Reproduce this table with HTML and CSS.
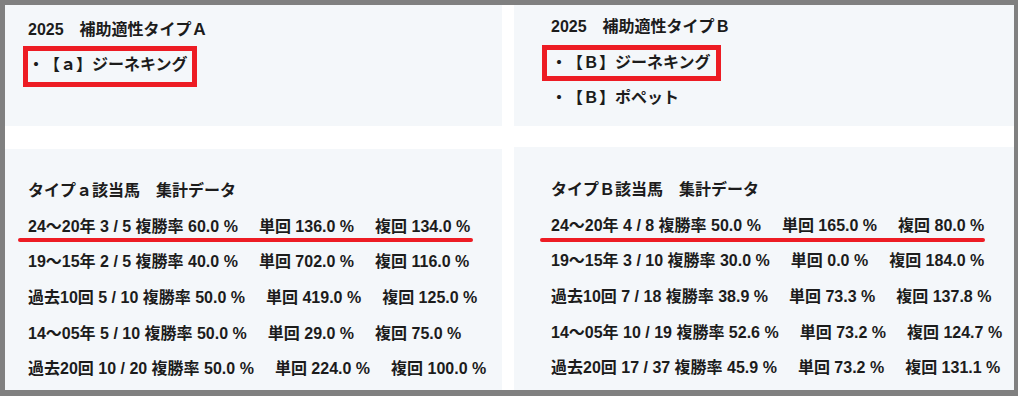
FILE: index.html
```html
<!DOCTYPE html>
<html lang="ja">
<head>
<meta charset="utf-8">
<title>補助適性タイプ</title>
<link rel="stylesheet" href="styles.css">
</head>
<body>
<div class="frame">
  <div class="col col-left">
    <section class="panel top top-left">
      <div class="line">2025　補助適性タイプＡ</div>
      <div class="line"><span class="boxed boxed-a">・【ａ】ジーネキング</span></div>
    </section>
    <section class="panel bottom bottom-left">
      <div class="line">タイプａ該当馬　集計データ</div>
      <div class="line row"><span>24～20年 3 / 5 複勝率 60.0 %</span><span class="seg">単回 136.0 %</span><span class="seg">複回 134.0 %</span><span class="uline uline-a"></span></div>
      <div class="line row"><span>19～15年 2 / 5 複勝率 40.0 %</span><span class="seg">単回 702.0 %</span><span class="seg">複回 116.0 %</span></div>
      <div class="line row"><span>過去10回 5 / 10 複勝率 50.0 %</span><span class="seg">単回 419.0 %</span><span class="seg">複回 125.0 %</span></div>
      <div class="line row"><span>14～05年 5 / 10 複勝率 50.0 %</span><span class="seg">単回 29.0 %</span><span class="seg">複回 75.0 %</span></div>
      <div class="line row"><span>過去20回 10 / 20 複勝率 50.0 %</span><span class="seg">単回 224.0 %</span><span class="seg">複回 100.0 %</span></div>
    </section>
  </div>
  <div class="col col-right">
    <section class="panel top top-right">
      <div class="line">2025　補助適性タイプＢ</div>
      <div class="line"><span class="boxed boxed-b">・【Ｂ】ジーネキング</span></div>
      <div class="line">・【Ｂ】ポペット</div>
    </section>
    <section class="panel bottom bottom-right">
      <div class="line">タイプＢ該当馬　集計データ</div>
      <div class="line row"><span>24～20年 4 / 8 複勝率 50.0 %</span><span class="seg">単回 165.0 %</span><span class="seg">複回 80.0 %</span><span class="uline uline-b"></span></div>
      <div class="line row"><span>19～15年 3 / 10 複勝率 30.0 %</span><span class="seg">単回 0.0 %</span><span class="seg">複回 184.0 %</span></div>
      <div class="line row"><span>過去10回 7 / 18 複勝率 38.9 %</span><span class="seg">単回 73.3 %</span><span class="seg">複回 137.8 %</span></div>
      <div class="line row"><span>14～05年 10 / 19 複勝率 52.6 %</span><span class="seg">単回 73.2 %</span><span class="seg">複回 124.7 %</span></div>
      <div class="line row"><span>過去20回 17 / 37 複勝率 45.9 %</span><span class="seg">単回 73.2 %</span><span class="seg">複回 131.1 %</span></div>
    </section>
  </div>
</div>
</body>
</html>
```
FILE: styles.css
```css
html, body {
  margin: 0;
  padding: 0;
  background: #ffffff;
}

.frame {
  box-sizing: border-box;
  width: 1018px;
  height: 396px;
  border-style: solid;
  border-color: #808080;
  border-width: 5px 4px 6px 5px;
  background: #ffffff;
  display: grid;
  grid-template-columns: 497px 500px;
  column-gap: 12px;
  font-family: "Liberation Sans", "Noto Sans CJK JP", sans-serif;
  font-weight: bold;
  font-size: 16px;
  color: #1c1c1c;
  text-spacing-trim: space-all;
}

.col {
  display: flex;
  flex-direction: column;
  min-height: 0;
}

.col-left { row-gap: 23px; }
.col-right { row-gap: 21px; }

.panel {
  background: #f4f7fa;
  box-sizing: border-box;
}

.top {
  height: 121px;
  flex: none;
}

.bottom {
  flex: 1;
}

.line {
  white-space: nowrap;
}

.top-left {
  padding: 6.5px 0 0 23px;
  line-height: 35px;
}

.top-right {
  padding: 4px 0 0 37px;
  line-height: 35.5px;
}

.bottom-left {
  padding: 24.2px 0 0 23px;
  line-height: 35.6px;
}

.bottom-right {
  padding: 25.2px 0 0 37px;
  line-height: 35.6px;
}

.row {
  position: relative;
}

.seg {
  margin-left: 21px;
}

.boxed {
  position: relative;
  display: inline-block;
  line-height: 20px;
  vertical-align: middle;
}

.boxed::after {
  content: "";
  position: absolute;
  border: 5px solid #ed1c24;
}

.boxed-a::after {
  left: -5px;
  right: -9px;
  top: -9px;
  bottom: -12px;
}

.boxed-b::after {
  left: -9px;
  right: -10px;
  top: -8px;
  bottom: -8px;
}

.uline {
  position: absolute;
  height: 4px;
  border-radius: 2px;
  background: #ed1c24;
}

.uline-a {
  left: -10px;
  width: 455px;
  top: 29px;
}

.uline-b {
  left: -11px;
  width: 445px;
  top: 30px;
}
```
